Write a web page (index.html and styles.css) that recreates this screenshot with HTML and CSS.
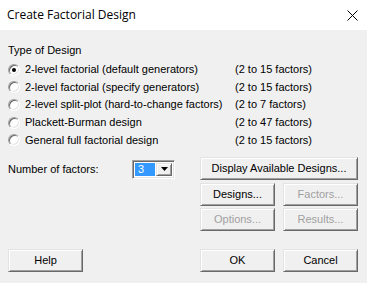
FILE: index.html
```html
<!DOCTYPE html>
<html>
<head>
<meta charset="utf-8">
<link rel="stylesheet" href="styles.css">
</head>
<body>
<div class="win">
  <div class="titlebar">
    <span class="title">Create Factorial Design</span>
    <svg class="close" width="11" height="11" viewBox="0 0 11 11"><path d="M0.5 0.5 L10.5 10.5 M10.5 0.5 L0.5 10.5" stroke="#000" stroke-width="1" fill="none"/></svg>
  </div>
  <div class="content">
    <div class="group-label">Type of Design</div>
    <div class="options">
      <div class="opt"><span class="radio checked"></span><span>2-level factorial (default generators)</span></div>
      <div class="range">(2 to 15 factors)</div>
      <div class="opt"><span class="radio"></span><span>2-level factorial (specify generators)</span></div>
      <div class="range">(2 to 15 factors)</div>
      <div class="opt"><span class="radio"></span><span>2-level split-plot (hard-to-change factors)</span></div>
      <div class="range">(2 to 7 factors)</div>
      <div class="opt"><span class="radio"></span><span>Plackett-Burman design</span></div>
      <div class="range">(2 to 47 factors)</div>
      <div class="opt"><span class="radio"></span><span>General full factorial design</span></div>
      <div class="range">(2 to 15 factors)</div>
    </div>
    <div class="mid">
      <div class="left">
        <span class="nf-label">Number of factors:</span>
        <div class="combo">
          <span class="sel">3</span>
          <span class="drop"><svg width="7" height="4" viewBox="0 0 7 4"><polygon points="0,0 7,0 3.5,4" fill="#000"/></svg></span>
        </div>
      </div>
      <div class="btns">
        <button class="btn wide">Display Available Designs...</button>
        <div class="pair r2"><button class="btn">Designs...</button><button class="btn" disabled>Factors...</button></div>
        <div class="pair r3"><button class="btn" disabled>Options...</button><button class="btn" disabled>Results...</button></div>
      </div>
    </div>
    <div class="footer">
      <button class="btn">Help</button>
      <div class="pair"><button class="btn">OK</button><button class="btn">Cancel</button></div>
    </div>
  </div>
</div>
</body>
</html>
```

FILE: styles.css
```css
* { box-sizing: border-box; }
body {
  margin: 0;
  background: #f0f0f0;
  font: 11px/13px "Liberation Sans", Arial, sans-serif;
  color: #000;
}
.win {
  width: 367px;
  height: 283px;
  background: #f0f0f0;
  display: flex;
  flex-direction: column;
}
.titlebar {
  height: 30px;
  flex: none;
  background: #fff;
  display: flex;
  align-items: center;
  justify-content: space-between;
  padding: 0 9px 0 7px;
}
.title {
  font: 12px/16px "Open Sans", sans-serif;
  color: #000;
}
.close { display: block; }
.content {
  padding: 14px 9px 0 8px;
}
.group-label { height: 13px; }
.options {
  margin-top: 4px;
  display: grid;
  grid-template-columns: 227px auto;
  grid-auto-rows: 17.6px;
  align-items: center;
}
.opt {
  display: flex;
  align-items: center;
}
.radio {
  width: 12px;
  height: 12px;
  flex: none;
  margin-right: 5px;
  border-radius: 50%;
  background: #fff;
  border: 1px solid;
  border-color: #a0a0a0 #fff #fff #a0a0a0;
  box-shadow: inset 1px 1px 0 #696969, inset -1px -1px 0 #e3e3e3;
  display: flex;
  align-items: center;
  justify-content: center;
}
.radio.checked::after {
  content: "";
  width: 4px;
  height: 4px;
  border-radius: 50%;
  background: #000;
}
.mid {
  margin-top: 8px;
  display: flex;
}
.left {
  width: 192px;
  height: 23px;
  display: flex;
  align-items: center;
}
.nf-label {
  width: 124px;
  padding-top: 2px;
}
.combo {
  width: 43px;
  height: 19px;
  margin-top: 2px;
  background: #fff;
  border: 1px solid;
  border-color: #a0a0a0 #fff #fff #a0a0a0;
  box-shadow: inset 1px 1px 0 #696969, inset -1px -1px 0 #e3e3e3;
  padding: 2px;
  display: flex;
  gap: 1px;
}
.sel {
  flex: 1;
  background: #3399ff;
  color: #fff;
  padding-left: 3px;
  line-height: 13px;
}
.drop {
  width: 16px;
  background: #f0f0f0;
  border: 1px solid;
  border-color: #e3e3e3 #696969 #696969 #e3e3e3;
  box-shadow: inset 1px 1px 0 #fff, inset -1px -1px 0 #a0a0a0;
  display: flex;
  align-items: center;
  justify-content: center;
}
.drop svg { display: block; }
.btns {
  width: 158px;
  display: flex;
  flex-direction: column;
}
.pair {
  display: flex;
  gap: 8px;
}
.r2 { margin-top: 3px; }
.r3 { margin-top: 2px; }
.btn {
  width: 75px;
  height: 23px;
  padding: 0;
  margin: 0;
  font: 11px/13px "Liberation Sans", Arial, sans-serif;
  color: #000;
  background: #f0f0f0;
  border: 1px solid;
  border-color: #e3e3e3 #696969 #696969 #e3e3e3;
  box-shadow: inset 1px 1px 0 #fff, inset -1px -1px 0 #a0a0a0;
  border-radius: 0;
}
.btn.wide { width: 158px; }
.btn:disabled { color: #a0a0a0; }
.footer {
  margin-top: 18px;
  display: flex;
  justify-content: space-between;
}
```
